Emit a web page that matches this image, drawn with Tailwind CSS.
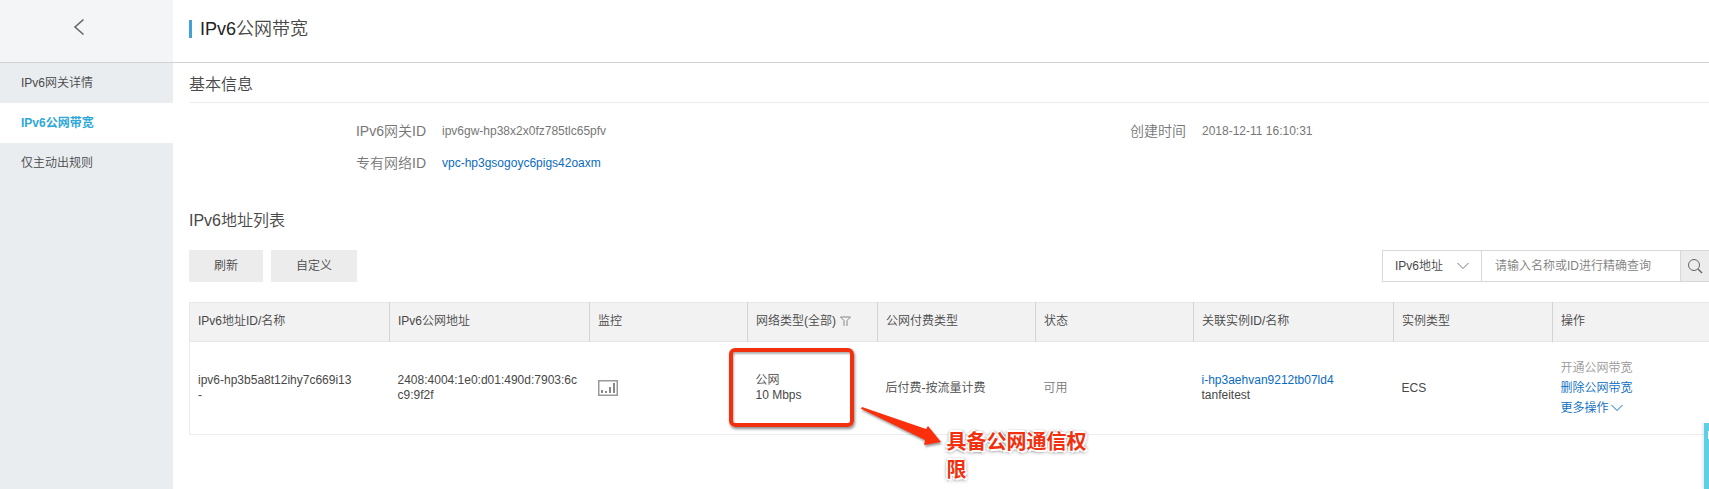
<!DOCTYPE html>
<html lang="zh-CN">
<head>
    <meta charset="UTF-8">
    <meta name="viewport" content="width=device-width, initial-scale=1.0">
    <title>IPv6公网带宽</title>
    <script src="https://cdn.jsdelivr.net/npm/@tailwindcss/browser@4"></script>
</head>
<body class="flex min-h-screen overflow-x-hidden bg-white font-['Liberation_Sans','Noto_Sans_CJK_SC',sans-serif] text-xs font-[350] text-[#484848]">
    <!-- Sidebar -->
    <aside class="w-[173px] shrink-0 bg-[#e9edf0]">
        <div class="flex h-[63px] items-start justify-center border-b border-[#d0d3d6] bg-[#f4f5f6] pt-[18px] pr-4">
            <button type="button" aria-label="返回">
                <svg class="h-[18px] w-[12px]" viewBox="0 0 12 18" fill="none" stroke="#666" stroke-width="1.6"><path d="M10.5 1.5 2 9l8.500 7.500"/></svg>
            </button>
        </div>
        <nav>
            <a href="#" class="flex h-10 items-center pl-[21px]">IPv6网关详情</a>
            <a href="#" class="flex h-10 items-center bg-white pl-[21px] font-bold text-[#2fa8d8]">IPv6公网带宽</a>
            <a href="#" class="flex h-10 items-center pl-[21px]">仅主动出规则</a>
        </nav>
    </aside>

    <main class="min-w-0 flex-1">
        <header class="h-[63px] border-b border-[#d0d3d6] pt-[15px] pl-4">
            <h1 class="flex h-7 items-center text-lg"><span class="mr-2 h-[18px] w-[3px] bg-[#469fd6]"></span><span class="text-[#222]">IPv6</span>公网带宽</h1>
        </header>

        <div class="pl-4">
            <h2 class="flex h-10 items-center border-b border-[#ebecec] pt-1 text-base">基本信息</h2>
            <dl class="grid grid-cols-2 pt-3 text-[#777]">
                <div class="flex h-8 items-center">
                    <dt class="w-[237px] text-right text-sm">IPv6网关ID</dt>
                    <dd class="pl-4">ipv6gw-hp38x2x0fz785tlc65pfv</dd>
                </div>
                <div class="flex h-8 items-center">
                    <dt class="w-[237px] text-right text-sm">创建时间</dt>
                    <dd class="pl-4">2018-12-11 16:10:31</dd>
                </div>
                <div class="flex h-8 items-center">
                    <dt class="w-[237px] text-right text-sm">专有网络ID</dt>
                    <dd class="pl-4"><a href="#" class="text-[#0a6cbf]">vpc-hp3gsogoyc6pigs42oaxm</a></dd>
                </div>
            </dl>

            <h2 class="mt-7 flex h-7 items-center text-base">IPv6地址列表</h2>

            <div class="mt-[15px] flex h-8 justify-between">
                <div class="flex gap-2">
                    <button type="button" class="bg-[#ececec] px-[25px]">刷新</button>
                    <button type="button" class="bg-[#ececec] px-[25px]">自定义</button>
                </div>
                <form class="flex">
                    <label class="relative flex">
                        <select aria-label="搜索类型" class="w-[100px] appearance-none border border-[#d7d8d9] bg-white pl-3">
                            <option>IPv6地址</option>
                        </select>
                        <svg class="pointer-events-none absolute top-3 right-[13px] h-2 w-3" viewBox="0 0 12 8" fill="none" stroke="#777"><path d="m.5 1 5.500 5.500L11.500 1"/></svg>
                    </label>
                    <input type="text" aria-label="搜索" placeholder="请输入名称或ID进行精确查询" class="w-[198px] border-y border-[#d7d8d9] pl-[13px] placeholder:text-[#808080]">
                    <button type="button" aria-label="查询" class="flex w-[29px] items-center justify-center border-y border-l border-[#d7d8d9] bg-[#ececec]">
                        <svg class="h-4 w-4" viewBox="0 0 16 16" fill="none" stroke="#666"><circle cx="7" cy="7" r="5.500"/><path stroke-width="1.500" d="m11 11 4 4"/></svg>
                    </button>
                </form>
            </div>

            <!-- Address list -->
            <table class="mt-5 w-full table-fixed text-left">
                <colgroup>
                    <col class="w-[200px]">
                    <col class="w-[200px]">
                    <col class="w-[158px]">
                    <col class="w-[130px]">
                    <col class="w-[158px]">
                    <col class="w-[158px]">
                    <col class="w-[200px]">
                    <col class="w-[159px]">
                    <col>
                </colgroup>
                <thead>
                    <tr class="h-[39px] border-y border-[#e6e7e7] bg-[#f2f2f2]">
                        <th class="border-l border-[#e6e7e7] px-2 pb-0.5 font-[350]">IPv6地址ID/名称</th>
                        <th class="border-l border-[#d2d3d3] px-2 pb-0.5 font-[350]">IPv6公网地址</th>
                        <th class="border-l border-[#d2d3d3] px-2 pb-0.5 font-[350]">监控</th>
                        <th class="border-l border-[#d2d3d3] px-2 pb-0.5 font-[350]">
                            <span class="flex items-center gap-1 whitespace-nowrap">网络类型(全部)
                                <svg class="h-[11px] w-[11px]" viewBox="0 0 11 11" fill="none" stroke="#888"><path d="M.5 1h10L7 4.500V10M.5 1 4 4.500V10"/></svg>
                            </span>
                        </th>
                        <th class="border-l border-[#d2d3d3] px-2 pb-0.5 font-[350]">公网付费类型</th>
                        <th class="border-l border-[#d2d3d3] px-2 pb-0.5 font-[350]">状态</th>
                        <th class="border-l border-[#d2d3d3] px-2 pb-0.5 font-[350]">关联实例ID/名称</th>
                        <th class="border-l border-[#d2d3d3] px-2 pb-0.5 font-[350]">实例类型</th>
                        <th class="border-l border-[#d2d3d3] px-2 pb-0.5 font-[350]">操作</th>
                    </tr>
                </thead>
                <tbody>
                    <tr class="h-[93px] border-b border-[#ebecec] leading-[15px]">
                        <td class="border-l border-[#ebecec] px-2">ipv6-hp3b5a8t12ihy7c669i13<br>-</td>
                        <td class="px-2 break-all">2408:4004:1e0:d01:490d:7903:6cc9:9f2f</td>
                        <td class="px-2">
                            <svg class="h-4 w-5" viewBox="0 0 20 16" role="img" aria-label="监控"><path fill="none" stroke="#999" stroke-width="1.500" d="M.75.75h18.500v14.500H.75z"/><path fill="#888" d="M3 10h2v3H3zM7 11h2v2H7zM11 7h2v6h-2zM15 3h2v10h-2z"/></svg>
                        </td>
                        <td class="relative px-2">
                            公网<br>10 Mbps
                            <!-- Callout: frame, arrow and note -->
                            <div class="absolute top-1.5 left-[-19px] h-[79px] w-[125px] rounded-md border-4 border-[#f1300f] shadow-[1px_2px_3px_rgba(0,0,0,0.45),inset_1px_2px_2px_rgba(0,0,0,0.3)]"></div>
                            <svg class="absolute top-16 left-[112px] h-11 w-[84px] drop-shadow-[1px_2px_1px_rgba(0,0,0,0.4)]" viewBox="0 0 84 44"><path fill="#fb2f0c" d="M1 2.500 2 1l64 22 2-3 13 16-17 3 1-5L1.500 3z"/></svg>
                            <p class="absolute top-[86px] left-[199px] w-[150px] text-xl leading-7 font-bold text-[#f1300f] [text-shadow:1px_0_#fff,-1px_0_#fff,0_1px_#fff,0_-1px_#fff,2px_1px_#fff,-2px_1px_#fff,1px_2px_#fff,-1px_-2px_#fff,0_1px_4px_rgba(0,0,0,0.9),0_0_3px_rgba(0,0,0,0.7)]">具备公网通信权限</p>
                        </td>
                        <td class="px-2">后付费-按流量计费</td>
                        <td class="px-2 text-[#777]">可用</td>
                        <td class="px-2"><a href="#" class="text-[#0a6cbf]">i-hp3aehvan9212tb07ld4</a><br>tanfeitest</td>
                        <td class="px-2">ECS</td>
                        <td class="px-2 leading-5 text-[#0a6cbf]">
                            <button type="button" disabled class="block text-[#999]">开通公网带宽</button>
                            <button type="button" class="block">删除公网带宽</button>
                            <button type="button" class="flex items-center gap-0.5">更多操作
                                <svg class="h-2 w-3" viewBox="0 0 12 8" fill="none" stroke="currentColor"><path d="m.5 1 5.500 5.500L11.500 1"/></svg>
                            </button>
                        </td>
                    </tr>
                </tbody>
            </table>
        </div>
    </main>

    <!-- Feedback tab on the window edge -->
    <div class="fixed right-0 bottom-0 flex h-[66px] w-[5px] justify-end bg-[#5fd0e4] pt-2 shadow-[-2px_0_3px_rgba(0,0,0,0.08)]"><span class="h-2 w-px bg-white"></span></div>
</body>
</html>
